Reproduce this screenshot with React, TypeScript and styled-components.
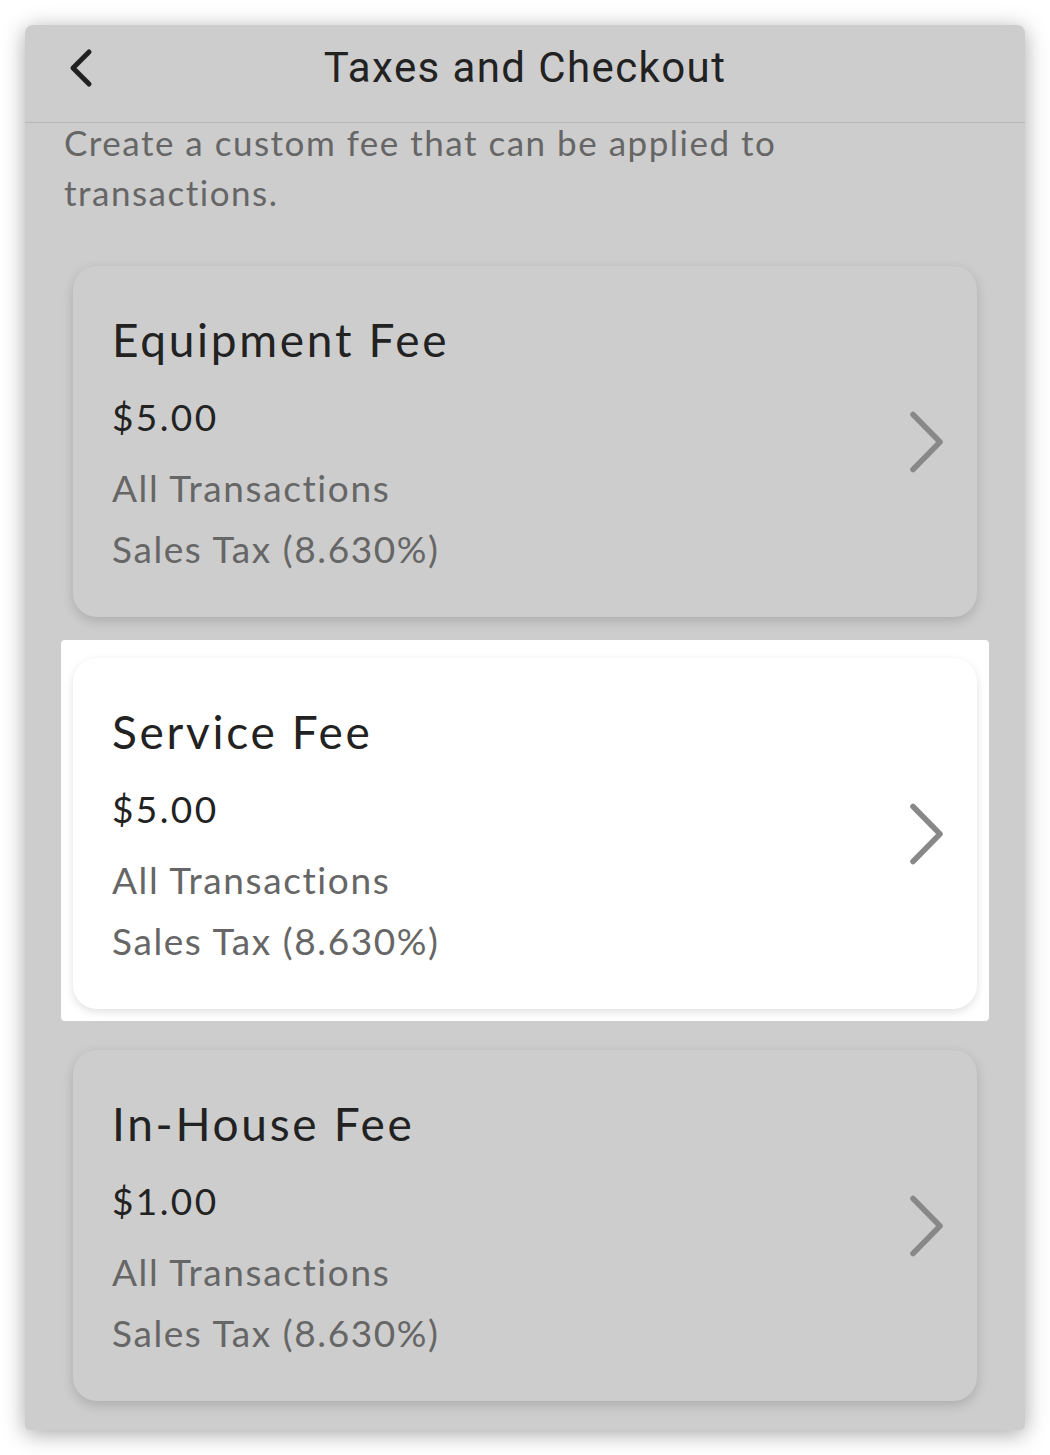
import React from "react";
import styled, { createGlobalStyle } from "styled-components";

const Global = createGlobalStyle`
  html, body { margin: 0; padding: 0; background: #ffffff; }
  body { font-family: "Lato", "Noto Sans", sans-serif; }
`;

const Page = styled.div`
  padding: 25px 25px 25px 25px;
  width: 1000px;
`;

const Panel = styled.div`
  background: #cdcdcd;
  border-radius: 8px 8px 5px 5px;
  box-shadow: 0 4px 22px rgba(0, 0, 0, 0.35);
  padding-bottom: 29px;
`;

const Header = styled.div`
  height: 97px;
  display: flex;
  align-items: center;
  justify-content: center;
  position: relative;
  border-bottom: 1.5px solid #b9b9b9;
`;

const BackButton = styled.button`
  position: absolute;
  left: 36px;
  top: 18px;
  width: 40px;
  height: 50px;
  border: none;
  background: transparent;
  padding: 0;
  display: flex;
  align-items: center;
  justify-content: center;
`;

const Title = styled.h1`
  margin: 0;
  font-family: "Roboto", "Liberation Sans", sans-serif;
  font-weight: 400;
  font-size: 42px;
  color: #222222;
  letter-spacing: 1.4px;
  transform: translateY(-6px);
`;

const Description = styled.p`
  margin: -6px 0 0 0;
  padding: 0 100px 0 39px;
  font-size: 35px;
  line-height: 50px;
  color: #666666;
  letter-spacing: 1.5px;
`;

const List = styled.div`
  display: flex;
  flex-direction: column;
  gap: 41px;
  padding: 0 48px;
  margin-top: 49px;
`;

const Highlight = styled.div<{ $on?: boolean }>`
  ${(p) =>
    p.$on
      ? `
    background: #ffffff;
    border-radius: 4px;
    margin: -18px -12px -12px -12px;
    padding: 18px 12px 12px 12px;
  `
      : ""}
`;

const Card = styled.div<{ $white?: boolean }>`
  height: 351px;
  box-sizing: border-box;
  border-radius: 24px;
  background: ${(p) => (p.$white ? "#ffffff" : "#cdcdcd")};
  box-shadow: ${(p) =>
    p.$white
      ? "0 3px 8px rgba(0,0,0,0.12)"
      : "0 4px 12px rgba(0,0,0,0.16)"};
  display: flex;
  align-items: center;
  padding: 0 30px 0 39px;
`;

const CardBody = styled.div`
  flex: 1;
  display: flex;
  flex-direction: column;
`;

const FeeName = styled.div`
  font-size: 46px;
  line-height: 1.2;
  color: #222222;
  letter-spacing: 2.7px;
`;

const Price = styled.div`
  font-size: 37px;
  line-height: 1.2;
  color: #222222;
  margin-top: 28px;
  letter-spacing: 2.4px;
`;

const Meta = styled.div<{ $gap: number }>`
  font-size: 37px;
  line-height: 1.2;
  color: #666666;
  margin-top: ${(p) => p.$gap}px;
  letter-spacing: 1.6px;
`;

const Chevron = () => (
  <svg width="40" height="64" viewBox="0 0 40 64" fill="none">
    <path
      d="M6 4.5 L33 32 L6 59.5"
      stroke="#888888"
      strokeWidth="5.5"
      strokeLinecap="round"
      strokeLinejoin="round"
    />
  </svg>
);

const BackIcon = () => (
  <svg width="30" height="42" viewBox="0 0 30 42" fill="none">
    <path
      d="M23 5 L7 21 L23 37"
      stroke="#222222"
      strokeWidth="5"
      strokeLinecap="round"
      strokeLinejoin="round"
    />
  </svg>
);

const fees = [
  { name: "Equipment Fee", price: "$5.00" },
  { name: "Service Fee", price: "$5.00", active: true },
  { name: "In-House Fee", price: "$1.00" },
];

export default function App() {
  return (
    <>
      <Global />
      <Page>
        <Panel>
          <Header>
            <BackButton aria-label="Back">
              <BackIcon />
            </BackButton>
            <Title>Taxes and Checkout</Title>
          </Header>
          <Description>
            Create a custom fee that can be applied to transactions.
          </Description>
          <List>
            {fees.map((f) => (
              <Highlight key={f.name} $on={f.active}>
                <Card $white={f.active}>
                  <CardBody>
                    <FeeName>{f.name}</FeeName>
                    <Price>{f.price}</Price>
                    <Meta $gap={27}>All Transactions</Meta>
                    <Meta $gap={16}>Sales Tax (8.630%)</Meta>
                  </CardBody>
                  <Chevron />
                </Card>
              </Highlight>
            ))}
          </List>
        </Panel>
      </Page>
    </>
  );
}
